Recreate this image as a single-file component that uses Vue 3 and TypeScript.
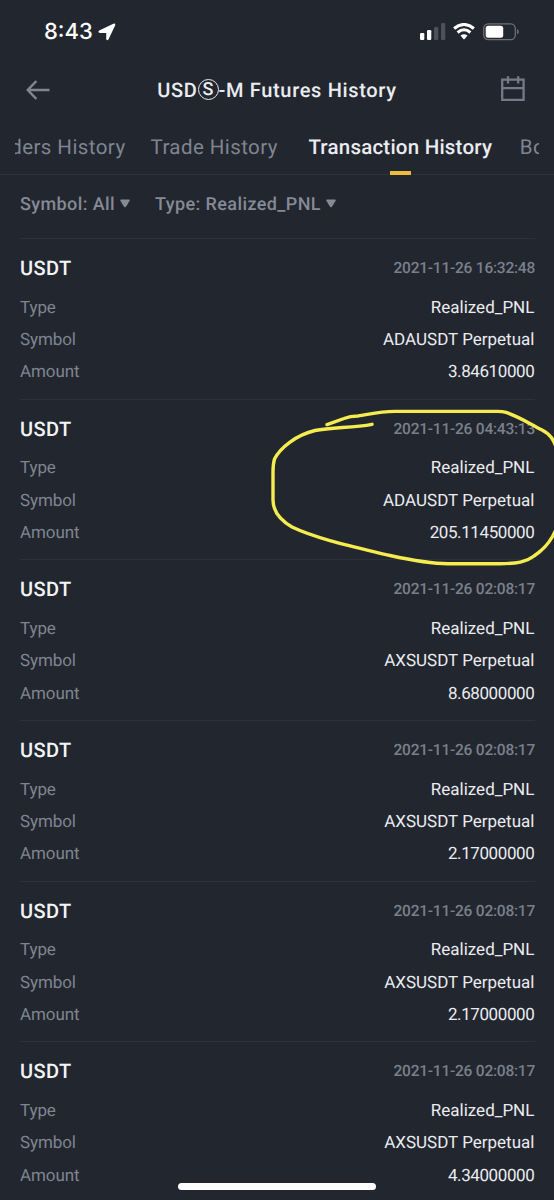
<script setup lang="ts">
interface Transaction {
  asset: string
  time: string
  type: string
  symbol: string
  amount: string
  marked?: boolean
}

const transactions: Transaction[] = [
  { asset: 'USDT', time: '2021-11-26 16:32:48', type: 'Realized_PNL', symbol: 'ADAUSDT Perpetual', amount: '3.84610000' },
  { asset: 'USDT', time: '2021-11-26 04:43:13', type: 'Realized_PNL', symbol: 'ADAUSDT Perpetual', amount: '205.11450000', marked: true },
  { asset: 'USDT', time: '2021-11-26 02:08:17', type: 'Realized_PNL', symbol: 'AXSUSDT Perpetual', amount: '8.68000000' },
  { asset: 'USDT', time: '2021-11-26 02:08:17', type: 'Realized_PNL', symbol: 'AXSUSDT Perpetual', amount: '2.17000000' },
  { asset: 'USDT', time: '2021-11-26 02:08:17', type: 'Realized_PNL', symbol: 'AXSUSDT Perpetual', amount: '2.17000000' },
  { asset: 'USDT', time: '2021-11-26 02:08:17', type: 'Realized_PNL', symbol: 'AXSUSDT Perpetual', amount: '4.34000000' },
]
</script>

<template>
  <main class="screen">
    <div class="status">
      <span class="clock">8:43</span>
      <svg class="location" width="18" height="18" viewBox="0 0 18 18">
        <path d="M1.2 7.4 15.4.7Q17.8 0 17.1 2.4L10.7 16Q9.2 18.4 8.2 16V10H1.9Q-.6 9.1 1.2 7.4Z" fill="#fff" />
      </svg>
      <svg class="signal" width="26" height="17" viewBox="0 0 26 17">
        <rect x="0" y="10" width="4.3" height="7" rx="1.2" fill="#fff" />
        <rect x="7" y="7" width="4.3" height="10" rx="1.2" fill="#fff" />
        <rect x="14" y="4" width="4.3" height="13" rx="1.2" fill="#4d5159" />
        <rect x="21" y="0" width="4.3" height="17" rx="1.2" fill="#4d5159" />
      </svg>
      <svg class="wifi" width="22" height="17" viewBox="0 0 22 17">
        <g fill="none" stroke="#fff" stroke-width="3">
          <path d="M1.1 5.5Q11-2.6 20.9 5.5" />
          <path d="M4.6 9.5Q11 4 17.4 9.5" />
        </g>
        <path d="M7.5 12.6Q11 9.8 14.5 12.6L11.6 15.9Q11 16.5 10.4 15.9Z" fill="#fff" />
      </svg>
      <svg class="battery" width="36" height="18" viewBox="0 0 36 18">
        <rect x=".7" y=".9" width="31.6" height="15.8" rx="4.6" fill="none" stroke="#6d7077" stroke-width="1.3" />
        <rect x="2.7" y="2.8" width="17.5" height="12" rx="2.5" fill="#fff" />
        <path d="M34 6Q35.8 7 35.8 8.8T34 11.6Z" fill="#6d7077" />
      </svg>
    </div>

    <header class="header">
      <svg width="24" height="20" viewBox="0 0 24 20" fill="none" stroke="#7f8692" stroke-width="2.5">
        <path d="M10.4 1 1.8 10l8.6 9M2 10h21.5" />
      </svg>
      <h1 class="title">
        <span>USD</span>
        <span class="coin"><span class="coin-letter">S</span></span>
        <span>-M Futures History</span>
      </h1>
      <svg class="calendar" width="24" height="26" viewBox="0 0 24 26" fill="none" stroke="#747a88" stroke-width="2.3">
        <path d="M1.2 3.7h21.4v20.2H1.2ZM1.2 12.2h21.4M7 .2v7.3M17.2.2v7.3" />
      </svg>
    </header>

    <nav class="tabs">
      <div class="track">
        <span class="tab orders">Orders History</span>
        <span class="tab trade">Trade History</span>
        <span class="tab active">Transaction History</span>
        <span class="tab">Borrow History</span>
      </div>
    </nav>

    <div class="filters">
      <span class="filter symbol-filter">Symbol: All
        <svg class="caret" width="10" height="9" viewBox="0 0 10 9"><path d="M1 .5H9Q10.2.7 9.5 1.9L6.3 7.3Q5 9 3.7 7.3L.5 1.9Q-.2.7 1 .5Z" fill="#858a95" /></svg>
      </span>
      <span class="filter">Type: Realized_PNL
        <svg class="caret" width="10" height="9" viewBox="0 0 10 9"><path d="M1 .5H9Q10.2.7 9.5 1.9L6.3 7.3Q5 9 3.7 7.3L.5 1.9Q-.2.7 1 .5Z" fill="#858a95" /></svg>
      </span>
    </div>

    <section class="list">
      <article v-for="(item, index) in transactions" :key="index" class="entry">
        <div class="row head">
          <h2 class="asset">{{ item.asset }}</h2>
          <time class="time">{{ item.time }}</time>
        </div>
        <div class="row">
          <span class="label">Type</span><span class="value">{{ item.type }}</span>
        </div>
        <div class="row">
          <span class="label">Symbol</span><span class="value">{{ item.symbol }}</span>
        </div>
        <div class="row">
          <span class="label">Amount</span><span class="value amount">{{ item.amount }}</span>
        </div>
        <svg v-if="item.marked" class="marker" width="294" height="180" viewBox="0 0 294 180">
          <path
            d="M112 24.3C92 28 72 27 55 30.5C36 35 20 48 14.5 59Q13 64 13 72V100C13 111 20 120 32 127C57 139 95 147 130 155.5C155 161 170 163.7 188 163.7H240C257 163.7 266 162 274 156C286 148 293 139 298 124V53C294 39 290 34 282 30C270 24 260 17 246 12.4Q243 11.4 237 11.4H135C118 11.4 107 15 98 16Q90 16 84 18.5L67 24.6"
            fill="none" stroke="#f5ec4f" stroke-width="3.4" stroke-linecap="round" stroke-linejoin="round"
          />
        </svg>
      </article>
    </section>
    <div class="home-indicator"></div>
  </main>
</template>

<style>
body {
  margin: 0;
  background: #22262f;
}
</style>

<style scoped>
.screen {
  position: relative;
  width: 554px;
  height: 1200px;
  overflow: hidden;
  background: #22262f;
  color: #eaecef;
  font-family: Roboto, sans-serif;
  text-rendering: geometricPrecision;
}

.status {
  display: flex;
  align-items: center;
  box-sizing: border-box;
  height: 63px;
  padding: 0 35px 0 44px;
}

.clock {
  color: #fff;
  font: 500 22px Inter, sans-serif;
}

.location {
  margin-left: 5px;
}

.signal {
  margin-left: auto;
}

.wifi {
  margin-left: 7px;
}

.battery {
  margin-left: 8px;
}

.header {
  display: flex;
  align-items: center;
  justify-content: space-between;
  height: 53px;
  padding: 0 29px 0 26px;
}

.title {
  display: flex;
  align-items: center;
  margin: 0 0 0 3px;
  font-size: 20px;
  font-weight: 500;
  letter-spacing: 0.66px;
  white-space: nowrap;
}

.coin {
  display: flex;
  align-items: center;
  justify-content: center;
  box-sizing: border-box;
  width: 21px;
  height: 21px;
  border: 1.4px solid #eaecef;
  border-radius: 50%;
}

.coin-letter {
  font-size: 18px;
  letter-spacing: 0;
}

.calendar {
  margin-top: -2px;
}

.tabs {
  height: 58px;
  padding: 0 15px;
  border-bottom: 1px solid #2c313a;
}

.track {
  display: flex;
  justify-content: flex-start;
  height: 59px;
  overflow: hidden;
}

.tab {
  position: relative;
  flex: none;
  margin-right: 25px;
  color: #7f8590;
  font-size: 20.5px;
  font-weight: 400;
  line-height: 64px;
  letter-spacing: 0.42px;
  white-space: nowrap;
}

.orders {
  margin-left: -26.5px;
}

.trade {
  margin-right: 30.5px;
}

.active {
  margin-right: 27.5px;
  color: #eaecef;
  font-weight: 500;
  letter-spacing: 0.22px;
}

.active::after {
  position: absolute;
  top: 55px;
  left: 50%;
  width: 21px;
  height: 4px;
  margin-left: -10.5px;
  background: #eebc3b;
  content: '';
}

.filters {
  display: flex;
  align-items: center;
  height: 58px;
  padding-left: 20px;
  color: #858a95;
  font-size: 18px;
  font-weight: 500;
  letter-spacing: 0.4px;
}

.filter {
  display: flex;
  align-items: center;
}

.symbol-filter {
  margin-right: 25px;
}

.caret {
  margin: -2px 0 0 5px;
}

.list {
  margin: 5px 19px 0 20px;
}

.entry {
  position: relative;
  box-sizing: border-box;
  height: 160.7px;
  padding-top: 10px;
  border-top: 1px solid #2c313a;
}

.row {
  display: flex;
  align-items: center;
  justify-content: space-between;
  height: 32.3px;
  padding-right: 0.6px;
}

.head {
  height: 38px;
  margin-bottom: 4.4px;
  padding-right: 0;
}

.asset {
  margin: 0;
  color: #f3f4f6;
  font-size: 20px;
  font-weight: 500;
  letter-spacing: 0.4px;
}

.time {
  color: #7a808b;
  font-size: 15.5px;
  font-weight: 500;
  letter-spacing: -0.23px;
}

.label {
  color: #7f8590;
  font-size: 17px;
  letter-spacing: -0.1px;
}

.value {
  color: #eaecef;
  font-size: 17px;
}

.amount {
  letter-spacing: -0.4px;
}

.marker {
  position: absolute;
  top: 0;
  left: 240px;
  z-index: 1;
}

.home-indicator {
  position: absolute;
  bottom: 10px;
  left: 178px;
  width: 198px;
  height: 7px;
  border-radius: 4px;
  background: #fff;
}
</style>
